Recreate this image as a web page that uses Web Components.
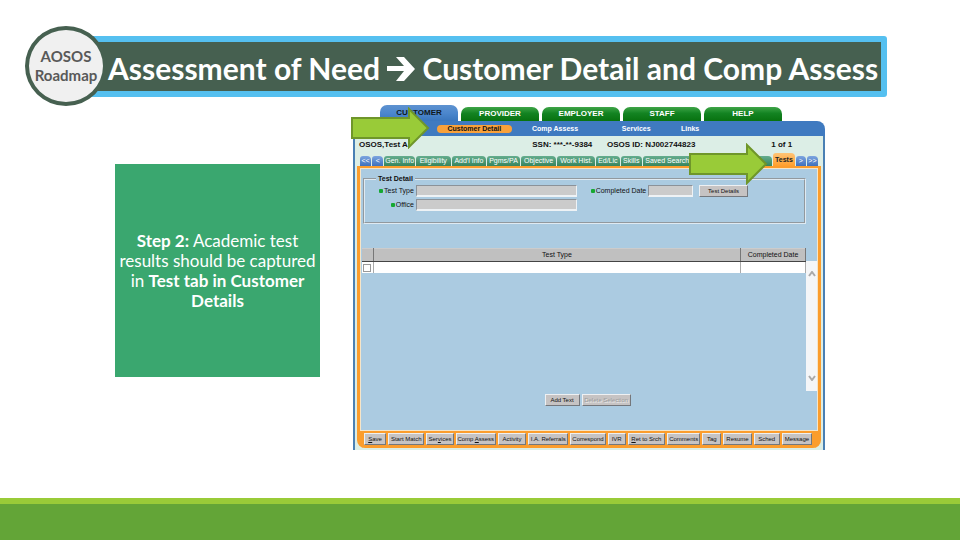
<!DOCTYPE html>
<html lang="en">
<head>
<meta charset="utf-8">
<title>Assessment of Need</title>
<style>
html,body{margin:0}
body{min-height:100vh;display:flex;flex-direction:column;background:#fff;font-family:Lato,"Open Sans",sans-serif;overflow-x:hidden}
main{display:grid;grid-template-columns:205fr 472fr;column-gap:33px;align-items:start;padding:7px 135px 0 115px}
</style>
</head>
<body>
<slide-title><span slot="badge">AOSOS Roadmap</span>Assessment of Need <arrow-glyph></arrow-glyph> Customer Detail and Comp Assess</slide-title>
<main>
<step-card><b>Step 2:</b> <span>Academic test</span> <span>results should be captured</span> <span>in</span> <b>Test tab in Customer</b> <b>Details</b></step-card>
<osos-app></osos-app>
</main>
<slide-footer></slide-footer>
<script>
function define(name, html, setup) {
  const t = document.createElement('template');
  t.innerHTML = html;
  customElements.define(name, class extends HTMLElement {
    constructor() {
      super();
      this.attachShadow({mode: 'open'}).append(t.content.cloneNode(true));
    }
    connectedCallback() { if (setup) setup(this, this.shadowRoot); }
  });
}

define('arrow-glyph', `<style>
:host{display:inline-block;width:28px;height:26px;vertical-align:-2px}
svg{display:block;width:100%;height:100%}
</style><svg viewBox="0 0 28 26" aria-hidden="true"><path fill="#fff" d="M0 10H17L9 1H17L28 13L17 25H9L17 15H0Z"/></svg>`);

define('slide-title', `<style>
:host{display:grid;grid-template-columns:82px 1fr;padding:26px 73px 0 25px;height:71px}
.badge{grid-area:1/1;z-index:1;box-sizing:border-box;width:82px;height:80px;border:4px solid #466050;border-radius:50%;background:#f0f0f0;color:#595959;display:flex;align-items:center;justify-content:center;text-align:center;font:bold 15px/19px Lato,sans-serif}
h1{grid-area:1/1/2/3;box-sizing:border-box;height:61px;margin:10px 0 0 41px;padding:2px 0 0 36px;border:6px solid #55c0f0;border-radius:3px;background:#466050;color:#fff;font:bold 30px/49px Lato,sans-serif;white-space:nowrap}
</style><div class="badge"><slot name="badge"></slot></div><h1><slot></slot></h1>`);

define('step-card', `<style>
:host{display:flex;align-items:center;justify-content:center;min-height:213px;margin-top:60px;background:#3aa76f;color:#fff;text-align:center;font:17px/20px Lato,sans-serif}
p{margin:0;padding:0 3px}
</style><p><slot></slot></p>`);

define('slide-footer', `<style>
:host{display:block;height:36px;margin-top:auto;border-top:6px solid #99cb38;background:#63a537}
</style>`);

define('block-arrow', `<style>
:host{display:block;width:79px;height:42px}
svg{display:block;width:100%;height:100%}
</style><svg viewBox="0 0 79 42" aria-hidden="true"><path fill="#99cb38" stroke="#6f962a" stroke-width="2" d="M1 11H58V2L77 21L58 40V31H1Z"/></svg>`);

define('module-tab', `<style>
:host{display:flex;padding-top:2px}
:host([active]){padding-top:0}
button{flex:1;border:0;padding:0;border-radius:7px 7px 0 0;background:linear-gradient(#3fa548,#138322 45%,#08720f);color:#fff;font:bold 8px/14px "Liberation Sans",sans-serif}
:host([active]) button{background:linear-gradient(#5e92d0,#4c87cd 50%,#3a76bd);color:#101820}
</style><button><slot></slot></button>`);

define('sub-tab', `<style>
:host{display:flex;min-width:0}
button{flex:1;min-width:0;overflow:hidden;border:0;padding:0;border-radius:3px 4px 0 0;background:linear-gradient(#65ad8e,#36855e);color:#fff;font:7px/10px "Liberation Sans",sans-serif;white-space:nowrap}
:host([nav]) button{background:linear-gradient(#7ca4df,#3f71bd)}
:host([active]) button{background:linear-gradient(#ffc476,#ff9e2c);color:#222;font-weight:bold;line-height:13px}
</style><button><slot></slot></button>`);

define('win-button', `<style>
:host{display:flex;min-width:0}
button{flex:1;min-width:0;box-sizing:border-box;height:12px;padding:0;border:1px solid;border-color:#eef0f2 #74777c #74777c #eef0f2;background:#c6c3c3;color:#111;font:6px/10px "Liberation Sans",sans-serif;white-space:nowrap}
button:disabled{color:#999;text-shadow:1px 1px #eee}
</style><button><slot></slot></button>`, (host, root) => {
  root.querySelector('button').disabled = host.hasAttribute('disabled');
});

define('test-field', `<style>
:host{display:contents}
label{display:flex;align-items:center;justify-content:flex-end;gap:1px;white-space:nowrap;font-size:7px;line-height:12px}
label::before{content:"";width:4px;height:4px;border-radius:1px;background:#16a832}
input{box-sizing:border-box;width:100%;min-width:0;height:12px;padding:0 2px;border:1px solid;border-color:#8b9299 #eef2f5 #eef2f5 #8b9299;border-bottom-width:2px;background:#cbcbcb;font:7px "Liberation Sans",sans-serif}
</style><label for="f"><slot></slot></label><input id="f" type="text">`);

define('test-table', `<style>
:host{display:grid;grid-template-columns:1fr 11px}
table{width:100%;border-collapse:collapse;table-layout:fixed;font:7px/12px "Liberation Sans",sans-serif;align-self:start}
th{height:12px;padding:0;background:#c0c0c0;border-right:1px solid #777;border-bottom:1px solid #444;border-top:1px solid #ccc;font-weight:normal;line-height:10px}
td{height:11px;padding:0;background:#fff;border-right:1px solid #aaa;line-height:0}
th:first-child,td:first-child{width:11px}
th:last-child,td:last-child{width:64px}
input{appearance:none;display:block;box-sizing:border-box;width:8px;height:8px;margin:0 0 0 1px;border:1px solid #999;background:#fff}
.bar{display:flex;flex-direction:column;justify-content:space-between;align-items:center;box-sizing:border-box;height:130px;margin-top:13px;padding:10px 0;background:#f4f6f8}
svg{display:block;width:8px;height:6px;fill:none;stroke:#aaa;stroke-width:2}
</style><table><thead><tr><th></th><th>Test Type</th><th>Completed Date</th></tr></thead>
<tbody><tr><td><input type="checkbox" aria-label="Select test"></td><td></td><td></td></tr></tbody></table>
<div class="bar"><svg viewBox="0 0 8 6"><path d="M1 5L4 1L7 5"/></svg><svg viewBox="0 0 8 6"><path d="M1 1L4 5L7 1"/></svg></div>`);

define('osos-app', `<style>
:host{display:block;position:relative;color:#111;font:8px/10px "Liberation Sans",sans-serif}
.modules{display:grid;grid-template-columns:repeat(5,1fr);gap:3px;padding:1px 43px 0 27px}
.links{display:grid;grid-template-columns:75fr 87fr 76fr 32fr;align-items:center;padding:0 119px 0 84px;height:15px;border-radius:8px 8px 0 0;background:#3f7ac0;text-align:center}
.links a{color:#fff;text-decoration:none;font-weight:bold;font-size:7px;line-height:8px;white-space:nowrap}
.links a.on{background:#f9a13a;color:#111;border-radius:4px}
.frame{border:solid #4a80b4;border-width:0 2px;background:#dceee6;padding:0 2px 2px}
.info{display:grid;grid-template-columns:174fr 75fr 165fr 50fr;height:17px;padding-left:2px;align-items:center;line-height:14px;white-space:nowrap;font-size:8px;font-weight:bold}
.tabs{display:grid;grid-template-columns:11fr 11fr 30fr 34fr 34fr 32fr 35fr 37fr 23fr 21fr 55fr 71fr 21fr 10fr 11fr;column-gap:1px;align-items:end;height:13px;padding:0 3px}
.panel{border:3px solid #fb9d2d;border-top-width:2px;border-bottom:0;border-radius:0 0 8px 8px;background:#fb9d2d}
.body{display:flow-root;background:#abcbe1;border:1px solid #f6e5c8;padding:6px 0 24px 1px}
fieldset{margin:0 11px 0 1px;padding:2px 56px 11px 11px;border:2px groove #dfeaf2;display:grid;grid-template-columns:38fr 162fr 67fr 45fr 53fr;gap:2px 2px;min-width:0}
legend{padding:0 2px;margin:0;font-size:7px;line-height:8px;font-weight:bold}
fieldset win-button{margin-left:4px}
test-table{margin:24px 0 3px}
.actions{display:grid;grid-template-columns:35px 49px;gap:2px;justify-content:center;margin-right:4px}
.tools{display:grid;grid-template-columns:22fr 36fr 27fr 40fr 28fr 40fr 35fr 18fr 37fr 33fr 19fr 28fr 26fr 30fr;gap:2px;padding:2px 6px 3px 4px}
block-arrow{position:absolute}
.a1{left:-2px;top:3px}
.a2{right:57px;top:39px}
</style>
<nav class="modules"><module-tab active>CUSTOMER</module-tab><module-tab>PROVIDER</module-tab><module-tab>EMPLOYER</module-tab><module-tab>STAFF</module-tab><module-tab>HELP</module-tab></nav>
<nav class="links"><a class="on" href="#">Customer Detail</a><a href="#">Comp Assess</a><a href="#">Services</a><a href="#">Links</a></nav>
<div class="frame">
<div class="info"><span>OSOS,Test A</span><span>SSN: ***-**-9384</span><span>OSOS ID: NJ002744823</span><span>1 of 1</span></div>
<nav class="tabs"><sub-tab nav>&lt;&lt;</sub-tab><sub-tab nav>&lt;</sub-tab><sub-tab>Gen. Info</sub-tab><sub-tab>Eligibility</sub-tab><sub-tab>Add'l Info</sub-tab><sub-tab>Pgms/PA</sub-tab><sub-tab>Objective</sub-tab><sub-tab>Work Hist.</sub-tab><sub-tab>Ed/Lic</sub-tab><sub-tab>Skills</sub-tab><sub-tab>Saved Searches</sub-tab><sub-tab>&nbsp;</sub-tab><sub-tab active>Tests</sub-tab><sub-tab nav>&gt;</sub-tab><sub-tab nav>&gt;&gt;</sub-tab></nav>
<div class="panel"><div class="body">
<fieldset><legend>Test Detail</legend><test-field>Test Type</test-field><test-field>Completed Date</test-field><win-button>Test Details</win-button><test-field>Office</test-field></fieldset>
<test-table></test-table>
<div class="actions"><win-button>Add Text</win-button><win-button disabled>Delete Selection</win-button></div>
</div>
<div class="tools"><win-button><u>S</u>ave</win-button><win-button>Start Match</win-button><win-button>Ser<u>v</u>ices</win-button><win-button>Comp <u>A</u>ssess</win-button><win-button>Activity</win-button><win-button>I.A. Referrals</win-button><win-button>Correspond</win-button><win-button>IVR</win-button><win-button><u>R</u>et to Srch</win-button><win-button>Comments</win-button><win-button>Tag</win-button><win-button>Resume</win-button><win-button>Sched</win-button><win-button>Message</win-button></div>
</div></div>
<block-arrow class="a1"></block-arrow><block-arrow class="a2"></block-arrow>`);
</script>
</body>
</html>
